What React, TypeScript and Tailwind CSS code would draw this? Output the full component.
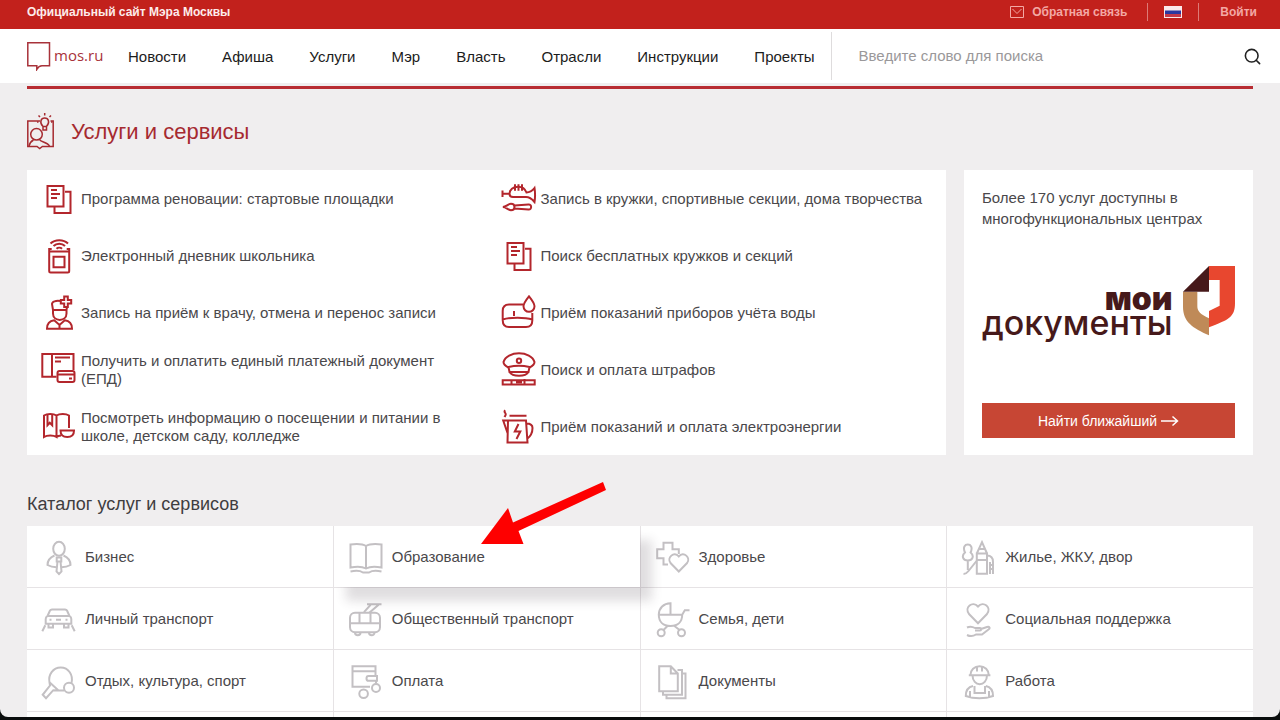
import type { ReactNode } from 'react';
import { Search } from 'lucide-react';

const NAV = ['Новости', 'Афиша', 'Услуги', 'Мэр', 'Власть', 'Отрасли', 'Инструкции', 'Проекты'];

const docsIcon = (
  <>
    <path d="M6.500 5h16v20.500h-16z" />
    <path d="M13.500 26v6H29.500V10.800H24" />
    <path d="M10 9h6M10 13h9M10 17h6" />
  </>
);

const SERVICES: { label: string; icon: ReactNode }[] = [
  { label: 'Программа реновации: стартовые площадки', icon: docsIcon },
  {
    label: 'Запись в кружки, спортивные секции, дома творчества',
    icon: (
      <>
        <path d="M1.500 9.500v6.500M1.500 12.800H8M25.500 11.500C24 7.500 21 5.700 17 5.700c-5 0-8.500 3-8.500 7 0 2 1.500 3.300 3.500 3.300h13c3.500 0 6 2 8.500 5 .8-5 .8-9 0-14-2 2.500-4.500 4.500-8 4.500z" />
        <path d="M14 3.200v6.500M17.500 3.200v6.500M21 3.200v6.500" />
        <path d="M1.800 26c3.500 0 5-3.200 8.200-3.200 2.200 0 3.500 1.200 3.500 3.200s-1.300 3.200-3.500 3.200c-3.200 0-4.700-3.200-8.200-3.200zM13.500 24.500l14-1c3.500-.3 3.500 5.300 0 5l-14-1" />
      </>
    ),
  },
  {
    label: 'Электронный дневник школьника',
    icon: (
      <>
        <path d="M8.200 13.500h20V33q0 1.500-1.500 1.500h-17Q8.200 34.500 8.200 33zM8.200 13.500V11h2.500M28.200 13.500V11h-2.500" />
        <path d="M12.500 18.700h11v10.500h-11z" />
        <path d="M9.500 5.500c4.500-4.500 13-4.500 17.500 0M12.500 8c3-3 8.500-3 11.500 0M15.500 10.800c1.500-1.500 4-1.500 5.500 0" />
      </>
    ),
  },
  { label: 'Поиск бесплатных кружков и секций', icon: docsIcon },
  {
    label: 'Запись на приём к врачу, отмена и перенос записи',
    icon: (
      <>
        <path d="M19 6c-4-.5-8 .5-8 3l1 6h13.500l.5-3M12 15v3.500c0 8.500 13.500 8.500 13.500 0V15" />
        <path d="M23.200 1.500h3.600v3.400h3.400v3.600h-3.400V12h-3.600V8.500h-3.400V4.900h3.400z" />
        <path d="M6 33.700c0-5.200 2-7.700 7.200-8.400l5.300 4.700 5.300-4.700c5.200.7 7.200 3.200 7.200 8.400zM18.500 30v3.700" />
      </>
    ),
  },
  {
    label: 'Приём показаний приборов учёта воды',
    icon: (
      <>
        <path d="M22 9.500H8c-4.500 0-6.300 2-6.300 6.500v9c0 5 2 7 6.300 7h17c4.500 0 6.300-2 6.300-6.500V18M1.700 24.500C9 22 24 22 31.300 24.500M13 16v5" />
        <path d="M28 1.300c3 3.700 5.500 6.700 5.500 10a5.500 5.500 0 0 1-11 0c0-3.300 2.500-6.300 5.500-10z" />
      </>
    ),
  },
  {
    label: 'Получить и оплатить единый платежный документ (ЕПД)',
    icon: (
      <>
        <path d="M15.500 24.800H1.300V2h31.200v16M11 2v22.800M14 5.500h15M14 9.500h6" />
        <rect x="16.500" y="19" width="17" height="11" rx="2" />
        <path d="M16.500 22.500h17M28 26.500h3" />
      </>
    ),
  },
  {
    label: 'Поиск и оплата штрафов',
    icon: (
      <>
        <path d="M7.500 15.500c-3-1.500-5-3.500-5-5.500C4 4.500 11 1.200 18 1.200S32 4.500 33.500 10c0 2-2 4-5 5.500" />
        <path d="M7.500 15c6-1.500 15-1.500 21 0L27.500 20h-19zM8.500 20c1.500 2.500 4.500 3.700 9.500 3.700s8-1.200 9.500-3.700" />
        <circle cx="18" cy="8.700" r="2.200" />
        <path d="M1.700 28.200h32v4.300h-32zM10.500 28.200v4.300M15 30.300h6M23.500 27v6.500" />
      </>
    ),
  },
  {
    label: 'Посмотреть информацию о посещении и питании в школе, детском саду, колледже',
    icon: (
      <>
        <path d="M15.500 28c-3-2-9.500-2-12.500 0V6.500c3-2 9.500-2 12.500 0zV6.500c3-2 9.500-2 12.500 0V19M15.500 28c1.500-1 3-1.300 4.500-1.500" />
        <path d="M6.500 5.200v11l2.300-2.500 2.400 2.500v-11" />
        <path d="M19.500 21.500H33c0 4-2.500 6.500-6.700 6.500s-6.800-2.500-6.800-6.500z" />
      </>
    ),
  },
  {
    label: 'Приём показаний и оплата электроэнергии',
    icon: (
      <>
        <path d="M8.500 6.700h17M4.200 1.200c-2 2 .8 2.500.5 4.300 0 1-.7 1.500-1.200 2.500" />
        <path d="M7 11.500h18l1.500 22h-20zM7 11.500H2.200l4.500 13M25.500 14.500c4 0 6 1.500 6 4.500 0 4-1.500 8-5.500 11" />
        <path d="M17.500 15l-3.700 7.500h5.500L15.500 30" />
      </>
    ),
  },
];

const CATALOG: { label: string; icon: ReactNode; active?: boolean }[] = [
  {
    label: 'Бизнес',
    icon: (
      <>
        <ellipse cx="18" cy="8.800" rx="5.800" ry="7" />
        <path d="M13.500 15.500c-4.500 2-7 4.500-7 9.500 3 1.800 6 2.300 9 2.300M22.500 15.500c4.500 2 7 4.500 7 9.500-3 1.800-6 2.300-9 2.300" />
        <path d="M15.700 17.500h4.600v4h-4.600zM16.500 21.500l-1 10 2.500 2.500 2.500-2.500-1-10" />
      </>
    ),
  },
  {
    label: 'Образование',
    active: true,
    icon: (
      <>
        <path d="M18 6c-4-2.500-11-2-15.500-1.500v23c5-1 11-1.500 15.500 1 4.500-2.500 10.500-2 15.500-1v-23C29 4 22 3.500 18 6zM18 6v22.500" />
        <path d="M2.500 31.500c5-1 9.500-1 12.500 1h6c3-2 7.500-2 12.500-1" />
      </>
    ),
  },
  {
    label: 'Здоровье',
    icon: (
      <>
        <path d="M13 24.500H8.500v-6.300H2.200v-9h6.300V2.800h9v6.400h6.300V14" />
        <path d="M23.800 31.500L15.500 23c-4-5 3.500-12.500 8.300-6.500 4.800-6 12.300 1.500 8.300 6.500z" />
      </>
    ),
  },
  {
    label: 'Жилье, ЖКУ, двор',
    icon: (
      <>
        <path d="M4 12.500C1.500 7 4 4.500 6.800 4.500S12 7 9.600 12.500c4 3.500 1.900 8-2.800 8s-6.800-4.500-2.800-8zM6.800 20.500V30M2.500 34c2.500 0 3.500-1 5-3l8-10" />
        <path d="M15.800 13.500H26v20.300H15.800zM15.800 20H26M15.800 13.500L21 2.200l5 11.300M18 9h6M26 15.500c4 0 6 2.500 6 6.500v12M29 22v12M29 25h3M29 29h3" />
      </>
    ),
  },
  {
    label: 'Личный транспорт',
    icon: (
      <>
        <path d="M6.500 14L9 8.500q.5-1 2-1h13q1.500 0 2 1l2.500 5.500zM6.500 14q-1.800 1-1.800 3v4.800h25.600V17q0-2-1.800-3z" />
        <path d="M7.500 21.800v3.700H12v-3.700M23 21.800v3.700h4.500v-3.700M8.500 17.800h2M24.500 17.800h2M15 17.800h5M4.300 23.200l-3 6M30.700 23.200l3 6" />
      </>
    ),
  },
  {
    label: 'Общественный транспорт',
    icon: (
      <>
        <rect x="2" y="10.800" width="30" height="19.400" rx="5" />
        <path d="M1 21.200h32M11.500 10.800v10.400M22.500 10.800v10.400M19 2.200h14.500M22.600 2.800L16 10.200M30.600 2.800l-9.300 8" />
        <path d="M7 30.500a2.700 2.700 0 0 0 5.500 0M21 30.500a2.700 2.700 0 0 0 5.500 0" />
      </>
    ),
  },
  {
    label: 'Семья, дети',
    icon: (
      <>
        <path d="M3.800 12.800C4 6 8.500 1.500 15.500 1.300v11.500M3.800 12.800h23.400c0 7-4.500 11.200-11.700 11.200S3.800 19.800 3.800 12.800zM27.200 12.800l2.600-4.500h4.700M12.500 24l-4 4M19.500 24l5 4" />
        <circle cx="6.200" cy="30.800" r="3.500" />
        <circle cx="26.500" cy="30.800" r="3.500" />
      </>
    ),
  },
  {
    label: 'Социальная поддержка',
    icon: (
      <>
        <path d="M17 21.200L8 12C3 5.500 11.500-1.500 17 4.500 22.500-1.500 31 5.500 26 12z" />
        <path d="M6 25.500c3-1.500 5.500-1 8 .5h5c1.500 0 1.500 2.500 0 2.500h-5M20 27l6-2c2.500-.7 3.500 1 1.500 2.500L21 32.500H15c-3 2-6 2-9 .5" />
      </>
    ),
  },
  {
    label: 'Отдых, культура, спорт',
    icon: (
      <>
        <path d="M30.500 19c2-8-3-15.500-10.800-15.500S7 11 8.500 18.300l9 8.200H23M8.500 18.300l.5 3.200-7.300 9.300L5 34.200l7.300-8 5.200.3" />
        <circle cx="28" cy="23.800" r="5" />
      </>
    ),
  },
  {
    label: 'Оплата',
    icon: (
      <>
        <path d="M27.500 12V2.200h-23v20.600H22M4.500 7.200h23M27.500 12h-7q-2 0-2 2.400t2 2.400h8.500V12zM28 16.800v2.700" />
        <circle cx="15.600" cy="29.800" r="4.300" />
        <circle cx="28" cy="24" r="4" />
      </>
    ),
  },
  {
    label: 'Документы',
    icon: (
      <>
        <path d="M4.200 2.200h11.600l7 7.300v17.700H4.200zM15.800 2.200v7.300h7" />
        <path d="M8 27.200v3.600h19V6h-4.500M11.500 30.800v3.400h19V9.500H27" />
      </>
    ),
  },
  {
    label: 'Работа',
    icon: (
      <>
        <path d="M9.400 11.200c0-5 4-9 9.200-9s9.200 4 9.200 9M7.800 11.200h21.600M16 2.500v5M21 2.500v5M11.500 11.200c0 12 14.500 12 14.500 0" />
        <path d="M12 22c-5 1-7.200 4-7.200 10 8 3 19.200 3 27.200 0 0-6-2.200-9-7.200-10M13.500 22v7h10.500v-7M9 27v6M28 27v6" />
      </>
    ),
  },
];

function Icon({ children, className }: { children: ReactNode; className: string }) {
  return (
    <svg viewBox="0 0 36 36" fill="none" stroke="currentColor" strokeWidth="2" className={`w-9 h-9 shrink-0 ${className}`} aria-hidden="true">
      {children}
    </svg>
  );
}

function TopBar() {
  return (
    <div className="flex items-center justify-between h-[29px] pl-[27px] pr-[23px] pb-[5px] bg-[#c2211c] text-xs font-bold">
      <a href="#" className="text-[#fdeceb]">Официальный сайт Мэра Москвы</a>
      <div className="flex items-center text-[#f3a8a4]">
        <a href="#" className="flex items-center gap-2">
          <svg viewBox="0 0 14 12" fill="none" stroke="currentColor" className="w-[14px] h-3" aria-hidden="true">
            <path d="M.5.500h13v11H.5zM2.500 3L7 7.500 11.500 3" />
          </svg>
          Обратная связь
        </a>
        <span className="w-px h-[18px] ml-5 bg-[#dd7a76]" />
        <button type="button" aria-label="Русский" className="mx-4">
          <svg viewBox="0 0 18 12" className="block w-[18px] h-3">
            <path d="M0 0h18v12H0z" fill="#fbe9ea" />
            <path d="M1 4.500h16V8H1z" fill="#2b38a0" />
            <path d="M1 8h16v3H1z" fill="#c43a4a" />
          </svg>
        </button>
        <span className="w-px h-[18px] mr-[21px] bg-[#dd7a76]" />
        <button type="button" className="font-bold">Войти</button>
      </div>
    </div>
  );
}

function Header() {
  return (
    <header className="flex items-stretch h-[54px] pl-[27px] bg-white">
      <a href="#" className="flex items-center gap-[3px] w-[101px] shrink-0 text-[#a8323a]">
        <svg viewBox="0 0 24 30" fill="none" stroke="currentColor" strokeWidth="1.500" className="w-6 h-[30px]" aria-hidden="true">
          <path d="M.8 1.800h21.700v23H15c-2 0-3.500.7-5.200 3.700v-3.700H.8z" />
        </svg>
        <span className="pb-0.5 font-['Open_Sans'] text-[15px] font-medium">mos.ru</span>
      </a>
      <nav className="flex items-center gap-9 pt-0.5 text-[15px] text-[#1c1c1c]">
        {NAV.map(item => (
          <a key={item} href="#">{item}</a>
        ))}
      </nav>
      <form className="flex flex-1 items-center my-[3px] ml-4 pl-[27px] pr-[18px] border-l border-[#dedcdd]">
        <input type="search" aria-label="Введите слово для поиска" placeholder="Введите слово для поиска" className="flex-1 min-w-0 bg-transparent text-[15px] placeholder:text-[#9a989a] outline-none" />
        <button type="button" aria-label="Найти">
          <Search className="w-[19px] h-[19px] text-[#222]" strokeWidth={2} />
        </button>
      </form>
    </header>
  );
}

function MyDocuments() {
  return (
    <aside className="flex flex-col w-[289px] shrink-0 px-[18px] py-[17px] bg-white">
      <p className="text-[15px] leading-[21px] text-[#4a484b]">Более 170 услуг доступны в многофункциональных центрах</p>
      <div className="flex justify-between mt-[37px] text-[#46191a] font-['Inter']">
        <p className="mt-5 text-right text-[34px] leading-6 font-medium">
          <b className="text-[32px] leading-6 font-black">мои</b>
          <br />
          документы
        </p>
        <svg viewBox="0 0 156 210" className="w-[52px] h-[70px] shrink-0" aria-hidden="true">
          <path d="M78 0h78v112c0 42-20 50-78 72v-49l32-16V42H78z" fill="#e8472f" />
          <path d="M0 77h43v43c0 16 8 24 35 37v51C30 186 0 168 0 122z" fill="#bf8a58" />
          <path d="M78 0v77H0z" fill="#46191a" />
        </svg>
      </div>
      <button type="button" className="flex items-center justify-center gap-1 h-[35px] mt-auto bg-[#c74634] text-sm text-white">
        Найти ближайший
        <svg viewBox="0 0 18 12" fill="none" stroke="currentColor" strokeWidth="1.500" className="w-[18px] h-3" aria-hidden="true">
          <path d="M0 6h16.500M11.500 1.500l5 4.500-5 4.500" />
        </svg>
      </button>
    </aside>
  );
}

function RedArrow() {
  return (
    <svg viewBox="0 0 126 63" className="absolute left-[147px] -top-11 w-[126px] h-[63px]" aria-hidden="true">
      <path d="M0 62L27 26l5 14.500L122 0l3 8-87.500 41 5 13z" fill="#fe0000" />
    </svg>
  );
}

export default function App() {
  return (
    <div className="h-screen pb-[3px] bg-[#0a0d0d] font-['Liberation_Sans',Arial,sans-serif]">
      <div className="h-full overflow-hidden rounded-b-lg bg-[#f0eeef]">
        <TopBar />
        <Header />
        <main className="px-[27px] pt-[3px]">
          <div className="h-[3px] bg-[#b82c32]" />
          <h1 className="flex items-center gap-4 mt-6 mb-5 text-[22px] leading-[37px] text-[#a62a30]">
            <svg viewBox="0 0 28 37" fill="none" stroke="currentColor" strokeWidth="1.500" className="w-7 h-[37px]" aria-hidden="true">
              <path d="M13 8H.8v25.500H10l2.700 2 2.700-2h10.800V8h-2.700" />
              <circle cx="9.500" cy="21.300" r="5.800" />
              <path d="M2 33c1-4 2.500-5 4.500-6M12.500 26.500c1 2.500 8 2.500 10 6.500" />
              <path d="M16 13.500c-4-4-2-8.500 1.700-8.500s5.700 4.500 1.700 8.500zM16 13.500V17h3.500v-3.500M17.700 0v2.500M11.500 2.500l1.500 1.500M24 2.500L22.500 4M10 9h1.500M24 9h1.500" />
            </svg>
            Услуги и сервисы
          </h1>

          <div className="flex gap-[18px]">
            <ul className="grid grid-cols-2 flex-1 bg-white">
              {SERVICES.map(service => (
                <li key={service.label}>
                  <a href="#" className="flex items-center gap-1 h-[57px] pl-[14px] pr-4 text-[15px] leading-[18px] text-[#4a484b]">
                    <Icon className="text-[#b3262c]">{service.icon}</Icon>
                    {service.label}
                  </a>
                </li>
              ))}
            </ul>
            <MyDocuments />
          </div>

          <h2 className="mt-[35px] mb-2 text-lg text-[#3f3d40]">Каталог услуг и сервисов</h2>
          <ul className="grid grid-cols-4 gap-px bg-[#e6e3e5]">
            {CATALOG.map(item => (
              <li key={item.label} className={item.active ? 'relative z-10 bg-white shadow-[12px_14px_10px_rgba(60,50,60,0.16)]' : 'bg-white'}>
                <a href="#" className="flex items-center gap-2 h-[61px] pl-[14px] pt-0.5 text-[15px] text-[#4a484b]">
                  <Icon className="text-[#c3c0c3]">{item.icon}</Icon>
                  {item.label}
                </a>
                {item.active && <RedArrow />}
              </li>
            ))}
            {/* top edge of the next row */}
            {[0, 1, 2, 3].map(col => (
              <li key={col} className="h-5 bg-white" aria-hidden="true" />
            ))}
          </ul>
        </main>
      </div>
    </div>
  );
}
